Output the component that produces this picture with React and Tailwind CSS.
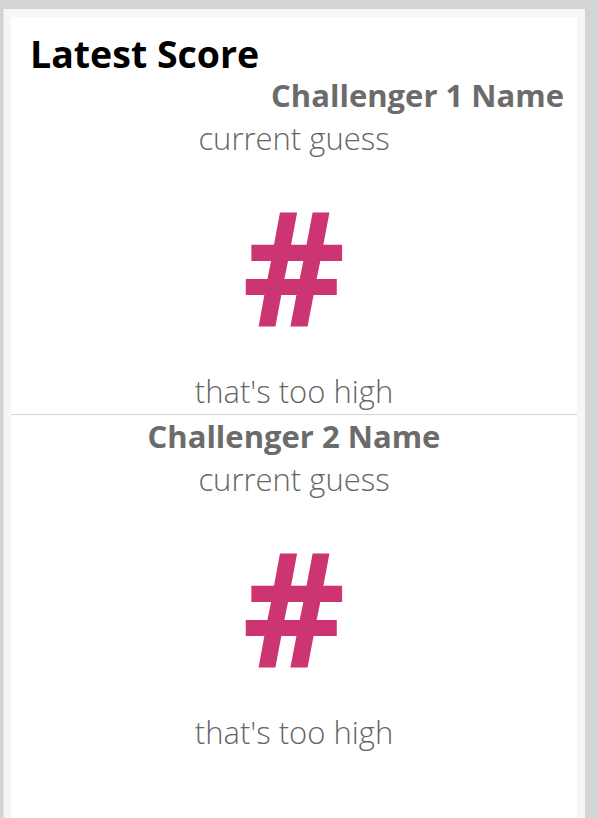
const challengers = [
  { name: 'Challenger 1 Name', guess: '#', hint: "that's too high", alignRight: true },
  { name: 'Challenger 2 Name', guess: '#', hint: "that's too high" },
];

function ChallengerCard({ name, guess, hint, alignRight }) {
  return (
    <div className="pt-[1px] pb-[3px] text-center">
      <h3
        className={
          alignRight
            ? 'pr-[13px] text-right text-[31px] leading-[40px] font-bold text-[#6b6b6b]'
            : 'text-[31px] leading-[40px] font-bold text-[#6b6b6b]'
        }
      >
        {name}
      </h3>
      <p className="mt-[3px] text-[31px] leading-[40px] font-light text-[#666]">current guess</p>
      <p className="mt-[27px] text-[160px] leading-[160px] font-bold text-[#cc3472]">{guess}</p>
      <p className="mt-[26px] text-[31px] leading-[40px] font-light text-[#666]">{hint}</p>
    </div>
  );
}

export default function App() {
  return (
    <div className="min-h-screen bg-[#d3d4d6] pl-[3px] pr-[13px] pt-[9px] font-['Open_Sans',sans-serif]">
      <div className="min-h-[809px] border-l border-[#e4e4e4] bg-[#f6f6f6] px-[7px] pt-[8px] pr-[8px]">
        <div className="min-h-[801px] bg-white">
          <h2 className="pt-[17px] pl-[19px] text-[37.5px] leading-[40px] font-bold text-black">Latest Score</h2>
          <div>
            {challengers.map((c, i) => (
              <div key={i} className={i > 0 ? 'border-t border-[#d4d4d4]' : ''}>
                <ChallengerCard {...c} />
              </div>
            ))}
          </div>
        </div>
      </div>
    </div>
  );
}
